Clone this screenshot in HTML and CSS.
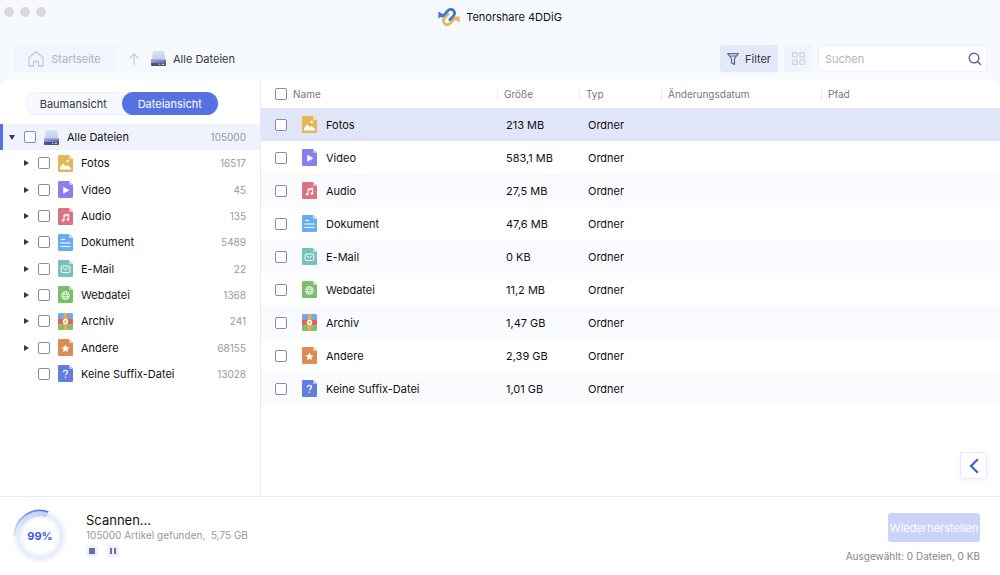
FILE: index.html
```html
<!DOCTYPE html>
<html lang="de">
<head>
    <meta charset="UTF-8">
    <meta name="viewport" content="width=device-width, initial-scale=1.0">
    <title>Tenorshare 4DDiG</title>
    <link rel="stylesheet" href="styles.css">
</head>
<body>

    <!-- Icon sprite -->
    <svg class="sprite" aria-hidden="true">
        <defs>
            <linearGradient id="disk-top" x1="0" y1="0" x2="0" y2="1">
                <stop offset="0" stop-color="#dfe1ea"/>
                <stop offset="1" stop-color="#c3caec"/>
            </linearGradient>
            <linearGradient id="disk-front" x1="0" y1="0" x2="1" y2="0">
                <stop offset="0" stop-color="#8f9bd8"/>
                <stop offset="1" stop-color="#5c68b2"/>
            </linearGradient>
        </defs>
        <symbol id="disk" viewBox="0 0 15 15">
            <path d="M3 0h9q1 0 1.200 1L14.400 9H.6L1.800 1Q2 0 3 0z" fill="url(#disk-top)"/>
            <path d="M.8 8h13.400q.8.800.8 2v3.500q0 1.500-1.500 1.500h-12Q0 15 0 13.500V10q0-1.200.8-2z" fill="url(#disk-front)"/>
            <path d="M.8 8h13.400l.6 1.600H.2z" fill="#a4afe2"/>
            <path d="M0 12h15v1.500q0 1.500-1.500 1.500h-12Q0 15 0 13.500z" fill="#4a5180"/>
            <circle cx="8.500" cy="13.300" r=".7" fill="#e8c77a"/>
            <path d="M10.500 13.300h2.500" stroke="#dfe4fa"/>
        </symbol>
        <symbol id="fotos" viewBox="0 0 15 17">
            <path d="M1.300 0H11l4 4v11.700q0 1.300-1.300 1.300H1.300Q0 17 0 15.700V1.300Q0 0 1.300 0z" fill="#e3b656"/>
            <path d="M11 0l4 4h-3q-1 0-1-1z" fill="#f2dcaa"/>
            <path d="M2 14.500v-2L5.200 8.300l2.500 3.200 1.600-1.700 3.700 3.500v1.200z" fill="#fff"/>
            <circle cx="9.700" cy="6" r="1.300" fill="#fff"/>
        </symbol>
        <symbol id="video" viewBox="0 0 15 17">
            <path d="M1.300 0H11l4 4v11.700q0 1.300-1.300 1.300H1.300Q0 17 0 15.700V1.300Q0 0 1.300 0z" fill="#8780ee"/>
            <path d="M11 0l4 4h-3q-1 0-1-1z" fill="#c6c2fa"/>
            <path d="M5.500 6.300l5.500 3-5.500 3z" fill="#fff" stroke="#fff" stroke-width=".6" stroke-linejoin="round"/>
        </symbol>
        <symbol id="audio" viewBox="0 0 15 17">
            <path d="M1.300 0H11l4 4v11.700q0 1.300-1.300 1.300H1.300Q0 17 0 15.700V1.300Q0 0 1.300 0z" fill="#da7282"/>
            <path d="M11 0l4 4h-3q-1 0-1-1z" fill="#f0b9c2"/>
            <path d="M6 12.300V6.800l4.700-.8v5.500M6 8.200l4.700-.8" fill="none" stroke="#fff" stroke-width="1"/>
            <circle cx="5.100" cy="12.300" r="1.200" fill="#fff"/>
            <circle cx="9.800" cy="11.500" r="1.200" fill="#fff"/>
        </symbol>
        <symbol id="dokument" viewBox="0 0 15 17">
            <path d="M1.300 0H11l4 4v11.700q0 1.300-1.300 1.300H1.300Q0 17 0 15.700V1.300Q0 0 1.300 0z" fill="#69adf1"/>
            <path d="M11 0l4 4h-3q-1 0-1-1z" fill="#b9dafb"/>
            <path d="M3 5.500h4M2.500 9h10M2.500 12.500h10" stroke="#fff" stroke-width="1.200"/>
        </symbol>
        <symbol id="mail" viewBox="0 0 15 17">
            <path d="M1.300 0H11l4 4v11.700q0 1.300-1.300 1.300H1.300Q0 17 0 15.700V1.300Q0 0 1.300 0z" fill="#76c2b9"/>
            <path d="M11 0l4 4h-3q-1 0-1-1z" fill="#bfe5df"/>
            <rect x="3.200" y="6" width="8.600" height="6.500" rx="1" fill="none" stroke="#fff"/>
            <path d="M4.700 7.800l2.800 2 2.800-2" fill="none" stroke="#fff"/>
        </symbol>
        <symbol id="web" viewBox="0 0 15 17">
            <path d="M1.300 0H11l4 4v11.700q0 1.300-1.300 1.300H1.300Q0 17 0 15.700V1.300Q0 0 1.300 0z" fill="#7cbd6c"/>
            <path d="M11 0l4 4h-3q-1 0-1-1z" fill="#bfe1b6"/>
            <g fill="none" stroke="#fff" stroke-width=".8">
                <circle cx="7.500" cy="9.500" r="3.900"/>
                <ellipse cx="7.500" cy="9.500" rx="1.800" ry="3.900"/>
                <path d="M3.900 8.200h7.200M3.900 10.800h7.200"/>
            </g>
        </symbol>
        <symbol id="archiv" viewBox="0 0 15 17">
            <path d="M0 5.700V1.300Q0 0 1.300 0h12.400Q15 0 15 1.300v4.400z" fill="#6aaaf0"/>
            <path d="M0 5.500h15v6H0z" fill="#d9694f"/>
            <path d="M0 11.400h15v4.300q0 1.300-1.300 1.300H1.300Q0 17 0 15.700z" fill="#80bf66"/>
            <path d="M5.800 0h3.400v17H5.800z" fill="#e3ae50"/>
            <circle cx="7.500" cy="8.500" r="2" fill="#e3ae50" stroke="#fff" stroke-width="1.400"/>
        </symbol>
        <symbol id="andere" viewBox="0 0 15 17">
            <path d="M1.300 0H11l4 4v11.700q0 1.300-1.300 1.300H1.300Q0 17 0 15.700V1.300Q0 0 1.300 0z" fill="#dd8c51"/>
            <path d="M11 0l4 4h-3q-1 0-1-1z" fill="#f3c7a6"/>
            <path d="M7.500 5.500l1.200 2.600 2.800.3-2.100 1.900.6 2.800-2.500-1.400L5 13.100l.6-2.800-2.100-1.900 2.800-.3z" fill="#fff"/>
        </symbol>
        <symbol id="keine" viewBox="0 0 15 17">
            <path d="M1.300 0H11l4 4v11.700q0 1.300-1.300 1.300H1.300Q0 17 0 15.700V1.300Q0 0 1.300 0z" fill="#617ee0"/>
            <path d="M11 0l4 4h-3q-1 0-1-1z" fill="#b4c3f6"/>
            <path d="M5.500 7.300q0-2 2-2t2 1.800q0 1-1 1.600-1 .6-1 1.600" fill="none" stroke="#fff" stroke-width="1.300"/>
            <circle cx="7.500" cy="12.300" r=".8" fill="#fff"/>
        </symbol>
    </svg>

    <header class="titlebar">
        <div class="lights"><i></i><i></i><i></i></div>
        <div class="brand">
            <svg width="22" height="20" viewBox="0 0 22 20" fill="none" stroke-width="2.800">
                <path d="M20 11.800C18.500 10.500 17 10.800 15.500 12.500L12 16.400Q9 19 6.400 16.400Q4.400 13.500 6.600 11L11 6.400" stroke="#e5b65c"/>
                <path d="M21.600 8.500V15.500L16.500 12.500z" fill="#e5b65c"/>
                <path d="M2 8.200C3.500 9.500 5 9.200 6.500 7.500L10 3.600Q13 1 15.600 3.600Q17.600 6.500 15.400 9L11 13.600" stroke="#3f78d0"/>
                <path d="M.4 4.500V11.500L5.500 7.500z" fill="#3f78d0"/>
            </svg>
            <span>Tenorshare 4DDiG</span>
        </div>
    </header>

    <nav class="toolbar">
        <button type="button" class="home-btn" disabled>
            <svg width="16" height="16" viewBox="0 0 16 16" fill="none" stroke="#c3c8d8" stroke-width="1.300" stroke-linejoin="round">
                <path d="M1 6.500L8 .8l7 5.700V15h-4.500v-4.500h-5V15H1z"/>
            </svg>
            Startseite
        </button>
        <button type="button" class="up-btn" aria-label="Nach oben" disabled>
            <svg width="10" height="12" viewBox="0 0 10 12" fill="none" stroke="#c8ccda" stroke-width="1.300">
                <path d="M5 12V1M.8 5.200L5 1l4.200 4.200"/>
            </svg>
        </button>
        <a href="#" class="crumb">
            <svg width="15" height="15"><use href="#disk"/></svg>
            Alle Dateien
        </a>
        <button type="button" class="filter-btn">
            <svg width="12" height="12" viewBox="0 0 12 12" fill="none" stroke="#5c6487" stroke-width="1.200" stroke-linejoin="round">
                <path d="M.7.700h10.600L7.500 5.500v6l-3-1.800V5.500zM2.500 3h7"/>
            </svg>
            Filter
        </button>
        <button type="button" class="grid-btn" aria-label="Rasteransicht">
            <svg width="13" height="13" viewBox="0 0 13 13" fill="none" stroke="#cbd0e3" stroke-width="1.200">
                <rect x=".6" y=".6" width="4.600" height="4.600" rx="1"/>
                <rect x="7.800" y=".6" width="4.600" height="4.600" rx="1"/>
                <rect x=".6" y="7.800" width="4.600" height="4.600" rx="1"/>
                <rect x="7.800" y="7.800" width="4.600" height="4.600" rx="1"/>
            </svg>
        </button>
        <div class="search">
            <input type="text" placeholder="Suchen" aria-label="Suchen">
            <button type="button" aria-label="Suche starten">
                <svg width="14" height="14" viewBox="0 0 14 14" fill="none" stroke="#5b6590" stroke-width="1.400">
                    <circle cx="6" cy="6" r="4.800"/>
                    <path d="M9.500 9.500l3.600 3.600"/>
                </svg>
            </button>
        </div>
    </nav>

    <main class="panel">
        <aside class="sidebar">
            <div class="switch">
                <button type="button">Baumansicht</button>
                <button type="button" class="active">Dateiansicht</button>
            </div>
            <ul class="tree">
                <li class="root">
                    <button type="button" class="caret open" aria-label="Alle Dateien zuklappen"></button>
                    <label><input type="checkbox"><svg width="15" height="15"><use href="#disk"/></svg>Alle Dateien</label>
                    <span class="count">105000</span>
                </li>
                <li>
                    <button type="button" class="caret" aria-label="Fotos aufklappen"></button>
                    <label><input type="checkbox"><svg width="15" height="17"><use href="#fotos"/></svg>Fotos</label>
                    <span class="count">16517</span>
                </li>
                <li>
                    <button type="button" class="caret" aria-label="Video aufklappen"></button>
                    <label><input type="checkbox"><svg width="15" height="17"><use href="#video"/></svg>Video</label>
                    <span class="count">45</span>
                </li>
                <li>
                    <button type="button" class="caret" aria-label="Audio aufklappen"></button>
                    <label><input type="checkbox"><svg width="15" height="17"><use href="#audio"/></svg>Audio</label>
                    <span class="count">135</span>
                </li>
                <li>
                    <button type="button" class="caret" aria-label="Dokument aufklappen"></button>
                    <label><input type="checkbox"><svg width="15" height="17"><use href="#dokument"/></svg>Dokument</label>
                    <span class="count">5489</span>
                </li>
                <li>
                    <button type="button" class="caret" aria-label="E-Mail aufklappen"></button>
                    <label><input type="checkbox"><svg width="15" height="17"><use href="#mail"/></svg>E-Mail</label>
                    <span class="count">22</span>
                </li>
                <li>
                    <button type="button" class="caret" aria-label="Webdatei aufklappen"></button>
                    <label><input type="checkbox"><svg width="15" height="17"><use href="#web"/></svg>Webdatei</label>
                    <span class="count">1368</span>
                </li>
                <li>
                    <button type="button" class="caret" aria-label="Archiv aufklappen"></button>
                    <label><input type="checkbox"><svg width="15" height="17"><use href="#archiv"/></svg>Archiv</label>
                    <span class="count">241</span>
                </li>
                <li>
                    <button type="button" class="caret" aria-label="Andere aufklappen"></button>
                    <label><input type="checkbox"><svg width="15" height="17"><use href="#andere"/></svg>Andere</label>
                    <span class="count">68155</span>
                </li>
                <li>
                    <span class="caret-space"></span>
                    <label><input type="checkbox"><svg width="15" height="17"><use href="#keine"/></svg>Keine Suffix-Datei</label>
                    <span class="count">13028</span>
                </li>
            </ul>
        </aside>

        <section class="content">
            <table class="files">
                <thead>
                    <tr>
                        <th class="col-check"><input type="checkbox" aria-label="Alle auswählen"></th>
                        <th class="col-name">Name</th>
                        <th class="col-size">Größe</th>
                        <th class="col-type">Typ</th>
                        <th class="col-date">Änderungsdatum</th>
                        <th class="col-path">Pfad</th>
                    </tr>
                </thead>
                <tbody>
                    <tr class="selected">
                        <td><input type="checkbox" id="f1"></td>
                        <td><label for="f1"><svg width="15" height="17"><use href="#fotos"/></svg>Fotos</label></td>
                        <td>213 MB</td><td>Ordner</td><td></td><td></td>
                    </tr>
                    <tr>
                        <td><input type="checkbox" id="f2"></td>
                        <td><label for="f2"><svg width="15" height="17"><use href="#video"/></svg>Video</label></td>
                        <td>583,1 MB</td><td>Ordner</td><td></td><td></td>
                    </tr>
                    <tr>
                        <td><input type="checkbox" id="f3"></td>
                        <td><label for="f3"><svg width="15" height="17"><use href="#audio"/></svg>Audio</label></td>
                        <td>27,5 MB</td><td>Ordner</td><td></td><td></td>
                    </tr>
                    <tr>
                        <td><input type="checkbox" id="f4"></td>
                        <td><label for="f4"><svg width="15" height="17"><use href="#dokument"/></svg>Dokument</label></td>
                        <td>47,6 MB</td><td>Ordner</td><td></td><td></td>
                    </tr>
                    <tr>
                        <td><input type="checkbox" id="f5"></td>
                        <td><label for="f5"><svg width="15" height="17"><use href="#mail"/></svg>E-Mail</label></td>
                        <td>0 KB</td><td>Ordner</td><td></td><td></td>
                    </tr>
                    <tr>
                        <td><input type="checkbox" id="f6"></td>
                        <td><label for="f6"><svg width="15" height="17"><use href="#web"/></svg>Webdatei</label></td>
                        <td>11,2 MB</td><td>Ordner</td><td></td><td></td>
                    </tr>
                    <tr>
                        <td><input type="checkbox" id="f7"></td>
                        <td><label for="f7"><svg width="15" height="17"><use href="#archiv"/></svg>Archiv</label></td>
                        <td>1,47 GB</td><td>Ordner</td><td></td><td></td>
                    </tr>
                    <tr>
                        <td><input type="checkbox" id="f8"></td>
                        <td><label for="f8"><svg width="15" height="17"><use href="#andere"/></svg>Andere</label></td>
                        <td>2,39 GB</td><td>Ordner</td><td></td><td></td>
                    </tr>
                    <tr>
                        <td><input type="checkbox" id="f9"></td>
                        <td><label for="f9"><svg width="15" height="17"><use href="#keine"/></svg>Keine Suffix-Datei</label></td>
                        <td>1,01 GB</td><td>Ordner</td><td></td><td></td>
                    </tr>
                </tbody>
            </table>
            <button type="button" class="preview-btn" aria-label="Vorschau öffnen">
                <svg width="10" height="16" viewBox="0 0 10 16" fill="none" stroke="#3c60d6" stroke-width="2.200">
                    <path d="M8.800 1.200L2 8l6.800 6.800"/>
                </svg>
            </button>
        </section>
    </main>

    <footer class="status">
        <div class="progress">
            <svg width="56" height="56" viewBox="0 0 56 56" aria-hidden="true">
                <defs>
                    <linearGradient id="ring" x1="0" y1="1" x2="1" y2="0">
                        <stop offset="0" stop-color="#c8ecfa"/>
                        <stop offset="1" stop-color="#3f73d8"/>
                    </linearGradient>
                    <linearGradient id="wedge" x1="0" y1="1" x2="1" y2="0">
                        <stop offset="0" stop-color="#e8effd"/>
                        <stop offset="1" stop-color="#bccdf4"/>
                    </linearGradient>
                </defs>
                <circle cx="28" cy="28" r="27" fill="#f5f7fe"/>
                <circle cx="28" cy="28" r="24" fill="#e9edfb"/>
                <path d="M3 28A25 25 0 0 1 36 4.300L33 13 28 28z" fill="url(#wedge)"/>
                <path d="M2.500 28A25.500 25.500 0 0 1 36.300 3.900" fill="none" stroke="url(#ring)" stroke-width="1.600"/>
                <circle cx="28" cy="28" r="19.500" fill="#fff"/>
                <circle cx="28" cy="28" r="18" fill="none" stroke="#dfe8fb" stroke-width=".7"/>
            </svg>
            <span>99%</span>
        </div>
        <div class="scan-info">
            <strong>Scannen...</strong>
            <span>105000 Artikel gefunden,&nbsp; 5,75 GB</span>
            <div class="scan-actions">
                <button type="button" aria-label="Stopp">
                    <svg width="6" height="6"><path d="M0 0h6v6H0z" fill="#66709b"/></svg>
                </button>
                <button type="button" aria-label="Pause">
                    <svg width="6" height="6"><path d="M0 0h2v6H0zM4 0h2v6H4z" fill="#66709b"/></svg>
                </button>
            </div>
        </div>
        <div class="recover">
            <button type="button" disabled>Wiederherstellen</button>
            <span>Ausgewählt: 0 Dateien, 0 KB</span>
        </div>
    </footer>

</body>
</html>
```
FILE: styles.css
```css
* {
    box-sizing: border-box;
}

body {
    margin: 0;
    height: 100vh;
    display: flex;
    flex-direction: column;
    background-color: #f6f9fe;
    color: #111;
    font-family: Inter, "Liberation Sans", sans-serif;
    font-size: 11px;
    line-height: 14px;
}

.sprite {
    position: absolute;
    width: 0;
    height: 0;
}

svg {
    display: block;
    flex: none;
}

button, input {
    font: inherit;
    color: inherit;
}

button {
    display: flex;
    align-items: center;
    justify-content: center;
    margin: 0;
    padding: 0;
    border: none;
    background: none;
}

input[type="checkbox"] {
    appearance: none;
    display: block;
    flex: none;
    width: 12px;
    height: 12px;
    margin: 0;
    border: 1px solid #868ca8;
    border-radius: 2px;
    background-color: #fff;
}

input[type="checkbox"]:checked {
    background-color: #5672e2;
}

/* Title bar */
.titlebar {
    display: grid;
    grid-template-columns: 1fr auto 1fr;
    align-items: center;
    height: 33px;
}

.lights {
    display: flex;
    align-self: start;
    gap: 6px;
    padding: 7px 4px;
}

.lights i {
    width: 10px;
    height: 10px;
    border-radius: 50%;
    background-color: #dadada;
}

.brand {
    display: flex;
    align-items: center;
    gap: 6px;
}

/* Toolbar */
.toolbar {
    display: flex;
    align-items: center;
    padding: 12px 13px 7px;
    color: #33363f;
}

.home-btn {
    gap: 7px;
    width: 103px;
    height: 27px;
    border-radius: 3px;
    background-color: #f1f5fd;
    color: #b0b3bd;
}

.up-btn {
    width: 35px;
    height: 27px;
}

.crumb {
    display: flex;
    align-items: center;
    gap: 7px;
    margin-right: auto;
    color: inherit;
    text-decoration: none;
}

.filter-btn {
    gap: 6px;
    width: 58px;
    height: 27px;
    border-radius: 3px;
    background-color: #e4e9fa;
}

.grid-btn {
    width: 28px;
    height: 27px;
    margin: 0 6px;
    border-radius: 3px;
    background-color: #f1f4fd;
}

.search {
    display: flex;
    width: 169px;
    height: 27px;
    border: 1px solid #eef1f8;
    border-radius: 3px;
    background-color: #fff;
}

.search input {
    flex: 1;
    min-width: 0;
    padding: 0 6px;
    border: none;
    background: none;
    outline: none;
}

.search input::placeholder {
    color: #b3b3b8;
}

.search button {
    width: 22px;
}

/* Main panel */
.panel {
    flex: 1;
    display: flex;
    min-height: 0;
    border-radius: 10px 10px 0 0;
    background-color: #fff;
    overflow: hidden;
}

.sidebar {
    width: 261px;
    padding-top: 13px;
    border-right: 1px solid #e8eaf0;
}

.switch {
    display: flex;
    width: 193px;
    height: 23px;
    margin: 0 0 9px 25px;
    border-radius: 12px;
    background-color: #f7f9fe;
    box-shadow: inset 0 0 0 1px #eef1f9;
    color: #33363f;
}

.switch button {
    flex: 1;
    border-radius: 12px;
}

.switch .active {
    background-color: #5672e2;
    color: #fff;
}

.tree {
    display: grid;
    grid-auto-rows: 1fr;
    height: 263px;
    margin: 0;
    padding: 0;
    list-style: none;
}

.tree li {
    display: flex;
    align-items: center;
    padding: 0 14px 0 20px;
}

.tree .root {
    padding-left: 3px;
    border-left: 3px solid #5672e2;
    background-color: #f0f3fc;
}

.tree label {
    display: flex;
    flex: 1;
    align-items: center;
    gap: 8px;
}

.caret, .caret-space {
    width: 12px;
    height: 12px;
    margin-right: 6px;
}

.caret::before {
    content: "";
    border-left: 5px solid #333750;
    border-top: 3px solid transparent;
    border-bottom: 3px solid transparent;
}

.caret.open::before {
    border-left: 3px solid transparent;
    border-right: 3px solid transparent;
    border-top: 5px solid #333750;
    border-bottom: none;
}

.count {
    color: #98989c;
    font-size: 10px;
}

/* File table */
.content {
    flex: 1;
    position: relative;
}

.files {
    width: 100%;
    table-layout: fixed;
    border-collapse: collapse;
}

.files th {
    height: 29px;
    padding: 0 7px;
    color: #77777c;
    font-size: 10px;
    font-weight: 400;
    text-align: left;
    background: linear-gradient(#eceef3, #eceef3) left center / 1px 12px no-repeat;
}

.files .col-check {
    width: 32px;
    padding: 0 0 0 14px;
    background: none;
}

.files .col-name {
    width: 204px;
    padding-left: 0;
    background: none;
}

.col-size, .col-type {
    width: 82px;
}

.col-date {
    width: 160px;
}

.files td {
    height: 33px;
    padding: 0 9px;
}

.files td:first-child {
    padding: 0 0 0 14px;
}

.files label {
    display: flex;
    align-items: center;
    gap: 9px;
}

.files tbody tr:nth-child(odd) {
    background-color: #fafbfe;
}

.files tbody .selected:nth-child(odd) {
    background-color: #e0e5f8;
}

.preview-btn {
    position: absolute;
    right: 13px;
    bottom: 17px;
    width: 27px;
    height: 27px;
    border: 1px solid #e6ebf9;
    border-radius: 2px;
    background-color: #fff;
    box-shadow: 0 2px 8px rgba(90, 110, 200, 0.08);
}

/* Status bar */
.status {
    display: flex;
    align-items: center;
    height: 79px;
    padding: 0 20px 0 12px;
    border-top: 1px solid #e8eaf0;
    background-color: #fff;
}

.progress {
    display: grid;
    place-items: center;
    margin-right: 18px;
}

.progress > * {
    grid-area: 1 / 1;
}

.progress span {
    z-index: 1;
    color: #3c5fd8;
    font-weight: 700;
}

.scan-info {
    flex: 1;
    padding-bottom: 3px;
    color: #98989c;
    font-size: 10px;
}

.scan-info strong {
    display: block;
    color: #111;
    font-size: 13px;
    font-weight: 400;
    line-height: 16px;
}

.scan-actions {
    display: flex;
    gap: 9px;
    margin-top: 3px;
}

.scan-actions button {
    width: 12px;
    height: 12px;
    border-radius: 2px;
    background-color: #eef1fb;
}

.recover {
    display: flex;
    flex-direction: column;
    align-items: flex-end;
    gap: 7px;
    padding-top: 4px;
    color: #85858a;
    font-size: 10px;
}

.recover button {
    width: 92px;
    height: 29px;
    border-radius: 3px;
    background-color: #cad4f9;
    color: #fff;
    font-size: 11px;
}
```
